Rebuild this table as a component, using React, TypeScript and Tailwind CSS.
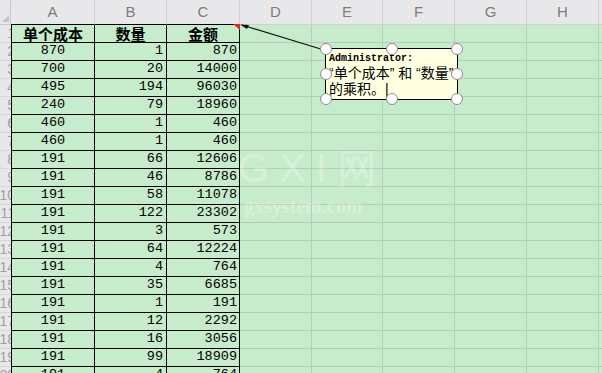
import React from "react";

const cols = [
  { key: "A", w: "w-[84px]" },
  { key: "B", w: "w-[72px]" },
  { key: "C", w: "w-[73px]" },
];

const rest = [
  { key: "D", w: "w-[72px]" },
  { key: "E", w: "w-[71px]" },
  { key: "F", w: "w-[72px]" },
  { key: "G", w: "w-[72px]" },
  { key: "H", w: "w-[72px]" },
];

const rows: [number, number, number][] = [
  [870, 1, 870],
  [700, 20, 14000],
  [495, 194, 96030],
  [240, 79, 18960],
  [460, 1, 460],
  [460, 1, 460],
  [191, 66, 12606],
  [191, 46, 8786],
  [191, 58, 11078],
  [191, 122, 23302],
  [191, 3, 573],
  [191, 64, 12224],
  [191, 4, 764],
  [191, 35, 6685],
  [191, 1, 191],
  [191, 12, 2292],
  [191, 16, 3056],
  [191, 99, 18909],
  [191, 4, 764],
];

const mono = "font-['Liberation_Mono',monospace] text-[13.5px] text-black";

// row numbers are mostly scrolled out of view, only a sliver shows
function RowHead({ n }: { n: number }) {
  return (
    <div className="w-[11px] shrink-0 overflow-hidden bg-[#e8e8ea] border-b border-[#d8d8d8] flex justify-end items-center">
      <span className="font-['Liberation_Sans',sans-serif] text-[14px] text-[#a0a0a0] mr-[-4px] whitespace-nowrap">
        {n}
      </span>
    </div>
  );
}

function GreenCells() {
  return (
    <>
      {rest.map((c) => (
        <div key={c.key} className={`${c.w} shrink-0 border-r border-b border-[#b8cbbb]`} />
      ))}
      <div className="flex-1 border-b border-[#b8cbbb]" />
    </>
  );
}

const handle =
  "absolute w-[12px] h-[12px] rounded-full bg-white border border-[#8c8c8c] -translate-x-1/2 -translate-y-1/2";

export default function App() {
  return (
    <div className="relative w-[602px] h-[373px] overflow-hidden bg-[#c7eccb]">
      {/* column letters */}
      <div className="flex h-[25px] bg-[#e8e8ea]">
        <div className="w-[11px] shrink-0 border-r border-b border-[#c8c8c8] relative">
          <div className="absolute right-[1px] bottom-[2px] w-0 h-0 border-l-[7px] border-l-transparent border-b-[7px] border-b-[#c4c4c4]" />
        </div>
        {cols.map((c) => (
          <div
            key={c.key}
            className={`${c.w} shrink-0 border-r border-[#d0d0d0] border-b border-b-black flex items-center justify-center font-['Liberation_Sans',sans-serif] text-[15px] text-[#7d7d7d]`}
          >
            {c.key}
          </div>
        ))}
        {rest.map((c) => (
          <div
            key={c.key}
            className={`${c.w} shrink-0 border-r border-b border-[#d0d0d0] flex items-center justify-center font-['Liberation_Sans',sans-serif] text-[15px] text-[#7d7d7d]`}
          >
            {c.key}
          </div>
        ))}
        <div className="flex-1 border-b border-[#d0d0d0]" />
      </div>

      {/* table header row */}
      <div className="flex h-[18px]">
        <RowHead n={1} />
        {["单个成本", "数量", "金额"].map((t, i) => (
          <div
            key={t}
            className={`${cols[i].w} shrink-0 ${i === 0 ? "border-l" : ""} border-r border-b border-black flex items-center justify-center font-['Noto_Sans_CJK_SC',sans-serif] font-bold text-[15px] leading-none text-black`}
          >
            {t}
          </div>
        ))}
        <GreenCells />
      </div>

      {rows.map((r, idx) => (
        <div key={idx} className="flex h-[18px]">
          <RowHead n={idx + 2} />
          <div className={`w-[84px] shrink-0 border-l border-r border-b border-black flex items-center justify-center ${mono}`}>
            {r[0]}
          </div>
          <div className={`w-[72px] shrink-0 border-r border-b border-black flex items-center justify-end pr-[3px] ${mono}`}>
            {r[1]}
          </div>
          <div className={`w-[73px] shrink-0 border-r border-b border-black flex items-center justify-end pr-[2px] ${mono}`}>
            {r[2]}
          </div>
          <GreenCells />
        </div>
      ))}

      {/* watermark */}
      <div className="absolute left-[238px] top-[148px] flex flex-col items-start text-white/30 pointer-events-none">
        <span className="font-['Liberation_Sans',sans-serif] text-[40px] leading-none tracking-[10px]">GXI网</span>
        <span className="font-['Liberation_Serif',serif] font-bold text-[20px] leading-none mt-[8px] ml-[6px]">gxsystem.com</span>
      </div>

      {/* comment indicator + arrow */}
      <div className="absolute left-[233px] top-[24px] w-0 h-0 border-l-[7px] border-l-transparent border-t-[6px] border-t-[#d9262c]" />
      <svg className="absolute left-0 top-0" width="602" height="373">
        <line x1="242" y1="25" x2="324" y2="50" stroke="#111" strokeWidth="1.2" />
        <polygon points="240,24.5 249,25 247,29" fill="#111" />
      </svg>

      {/* comment box */}
      <div className="absolute left-[325px] top-[48px] w-[133px] h-[52px] bg-[#ffffe1] border border-black pl-[3px] pt-[3px]">
        <div className="font-['Liberation_Mono',monospace] font-bold text-[10px] leading-[13px] text-black">
          Administrator:
        </div>
        <div className="font-['Liberation_Sans','Noto_Sans_CJK_SC',sans-serif] text-[14px] leading-[16px] text-black whitespace-nowrap">
          “单个成本” 和 “数量”
        </div>
        <div className="font-['Liberation_Sans','Noto_Sans_CJK_SC',sans-serif] text-[14px] leading-[16px] text-black whitespace-nowrap">
          的乘积。<span className="text-black">|</span>
        </div>
        <div className={`${handle} left-0 top-0`} />
        <div className={`${handle} left-1/2 top-0`} />
        <div className={`${handle} left-full top-0`} />
        <div className={`${handle} left-0 top-1/2`} />
        <div className={`${handle} left-full top-1/2`} />
        <div className={`${handle} left-0 top-full`} />
        <div className={`${handle} left-1/2 top-full`} />
        <div className={`${handle} left-full top-full`} />
      </div>
    </div>
  );
}
